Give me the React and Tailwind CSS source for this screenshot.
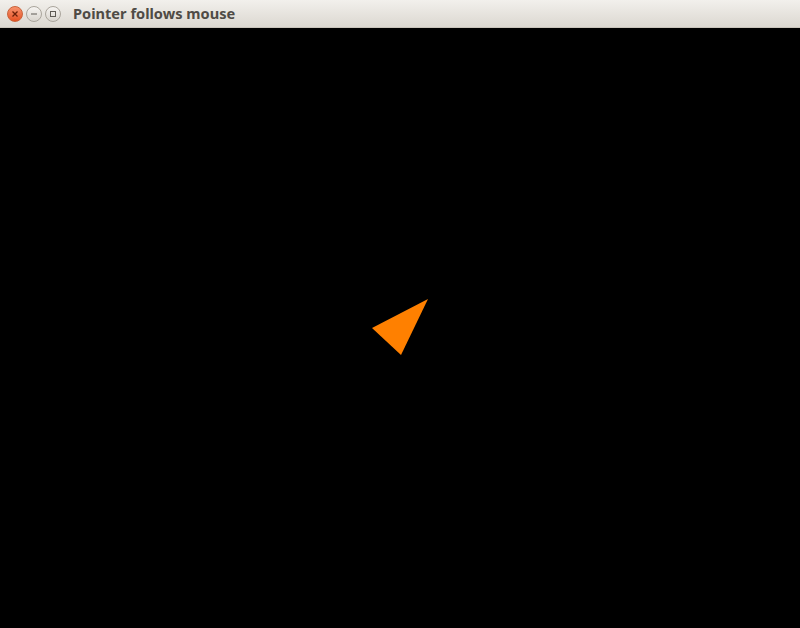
export default function App() {
    return (
        <div className="w-[800px] h-[628px] flex flex-col bg-black overflow-hidden">
            {/* Title bar */}
            <div className="h-[28px] shrink-0 flex items-center bg-gradient-to-b from-[#f2f0ec] to-[#dcd8d1] border-b border-[#c9c4bb]">
                <div className="flex items-center gap-[3px] pl-[7px]">
                    <div className="w-[16px] h-[16px] rounded-full bg-gradient-to-b from-[#f7926c] to-[#e5501f] border border-[#c9623a] flex items-center justify-center">
                        <svg width="8" height="8" viewBox="0 0 8 8">
                            <path d="M1.5 1.5L6.5 6.5M6.5 1.5L1.5 6.5" stroke="#6a2008" strokeWidth="1.3" />
                        </svg>
                    </div>
                    <div className="w-[16px] h-[16px] rounded-full bg-gradient-to-b from-[#f6f4f1] to-[#d9d5ce] border border-[#aaa59c] flex items-center justify-center">
                        <svg width="8" height="8" viewBox="0 0 8 8">
                            <path d="M1 4H7" stroke="#5e5a54" strokeWidth="1" />
                        </svg>
                    </div>
                    <div className="w-[16px] h-[16px] rounded-full bg-gradient-to-b from-[#f6f4f1] to-[#d9d5ce] border border-[#aaa59c] flex items-center justify-center">
                        <svg width="8" height="8" viewBox="0 0 8 8">
                            <rect x="1.5" y="1.5" width="5" height="5" fill="none" stroke="#5e5a54" strokeWidth="1" />
                        </svg>
                    </div>
                </div>
                <span className="ml-[12px] text-[14.6px] font-bold text-[#4f4b45] font-['Noto_Sans','DejaVu_Sans',sans-serif] leading-none">
                    Pointer follows mouse
                </span>
            </div>

            {/* Canvas */}
            <div className="flex-1">
                <svg width="800" height="600" viewBox="0 28 800 600">
                    <polygon points="428,299 372,328 401,355" fill="#ff8000" />
                </svg>
            </div>
        </div>
    );
}
